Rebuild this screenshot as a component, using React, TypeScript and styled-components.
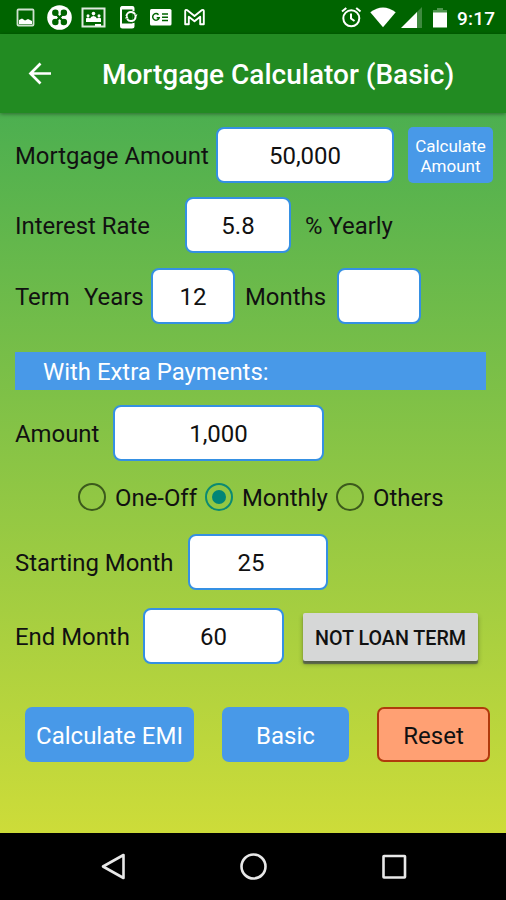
import React, { useState } from "react";
import styled, { createGlobalStyle } from "styled-components";

const GlobalStyle = createGlobalStyle`
  * {
    box-sizing: border-box;
  }

  body {
    margin: 0;
    font-family: Roboto, "Noto Sans", sans-serif;
  }
`;

const Screen = styled.div`
  display: flex;
  flex-direction: column;
  width: 506px;
  height: 900px;
  overflow: hidden;
`;

const StatusBar = styled.div`
  display: flex;
  justify-content: space-between;
  flex: none;
  height: 34px;
  background: #006400;
`;

const StatusGroup = styled.div<{ $width: number }>`
  display: flex;
  width: ${({ $width }) => $width}px;
`;

const Clock = styled.span`
  margin-left: 5px;
  color: #fff;
  font-size: 19px;
  font-weight: 500;
  line-height: 37px;
  letter-spacing: 0.2px;
`;

const Header = styled.header`
  display: flex;
  align-items: center;
  flex: none;
  height: 79px;
  padding: 3px 0 0 24px;
  background: #228b22;
  box-shadow: 0 1px 4px rgba(0, 0, 0, 0.4);
  z-index: 1;
`;

const BackButton = styled.button`
  display: flex;
  width: 78px;
  padding: 0 0 2px;
  border: 0;
  background: none;
`;

const Title = styled.h1`
  margin: 0;
  color: #fff;
  font-size: 28px;
  font-weight: 500;
  line-height: 36px;
  white-space: nowrap;
`;

const Form = styled.form`
  display: flex;
  flex-direction: column;
  flex: 1;
  padding: 14px 0 0 15px;
  background: linear-gradient(#4caf50, #cddc39);
`;

const Row = styled.div<{ $gap: number }>`
  display: flex;
  align-items: center;
  flex: none;
  height: 56px;
  margin-bottom: ${({ $gap }) => $gap}px;
`;

const Label = styled.label<{ $width?: number }>`
  width: ${({ $width }) => ($width ? `${$width}px` : "auto")};
  flex: none;
  padding-top: 2px;
  color: #111;
  font-size: 23.9px;
  line-height: 32px;
  white-space: nowrap;
`;

const Input = styled.input<{ $width: number; $shift?: number }>`
  width: ${({ $width }) => $width}px;
  height: 56px;
  padding: 2px ${({ $shift = 0 }) => $shift}px 0 0;
  border: 2px solid #3590e3;
  border-radius: 8px;
  outline: none;
  background: #fff;
  color: #111;
  font: 24px/32px Roboto, "Noto Sans", sans-serif;
  text-align: center;
`;

const Button = styled.button<{ $width: number; $small?: boolean; $danger?: boolean }>`
  width: ${({ $width }) => $width}px;
  height: ${({ $small }) => ($small ? 56 : 55)}px;
  padding: ${({ $small }) => ($small ? 1 : 2)}px 0 0;
  border: ${({ $danger }) => ($danger ? "2px solid #b03a0c" : "0")};
  border-radius: ${({ $small }) => ($small ? 5 : 7)}px;
  background: ${({ $danger }) => ($danger ? "#ffa073" : "#4899e8")};
  color: ${({ $danger }) => ($danger ? "#111" : "#fff")};
  font-family: inherit;
  font-size: ${({ $small }) => ($small ? 17 : 24)}px;
  line-height: ${({ $small }) => ($small ? 20 : 28)}px;
`;

const TermButton = styled.button`
  width: 175px;
  height: 48px;
  margin: 1px 0 0 19px;
  padding: 4px 0 0;
  border: 0;
  border-radius: 2px;
  background: #d6d7d7;
  box-shadow: 0 3px 1px rgba(70, 75, 80, 0.75), 0 3px 5px rgba(0, 0, 0, 0.3);
  color: #111;
  font-family: inherit;
  font-size: 19.7px;
  font-weight: 500;
`;

const Banner = styled.h2`
  width: 471px;
  height: 38px;
  margin: 0 0 15px;
  padding-left: 28px;
  flex: none;
  background: #4899e8;
  color: #fff;
  font-size: 23.9px;
  font-weight: 400;
  line-height: 40px;
`;

const Options = styled.div`
  display: flex;
  align-items: center;
  height: 32px;
  margin: 20px 0 21px 63px;
  flex: none;
`;

const Radio = styled.button<{ $checked: boolean }>`
  display: flex;
  align-items: center;
  justify-content: center;
  width: 28px;
  height: 28px;
  flex: none;
  margin-right: 9px;
  padding: 0;
  border: 2px solid ${({ $checked }) => ($checked ? "#0b8a72" : "#3c5a1c")};
  border-radius: 50%;
  background: none;

  &::after {
    content: "";
    width: 14px;
    height: 14px;
    border-radius: 50%;
    background: ${({ $checked }) => ($checked ? "#008577" : "transparent")};
  }
`;

const Actions = styled.div`
  display: flex;
  gap: 28px;
  margin: 43px 0 0 10px;
`;

const NavBar = styled.nav`
  flex: none;
  height: 67px;
  background: #000;
`;

const options = [
  { name: "One-Off", width: 90 },
  { name: "Monthly", width: 94 },
  { name: "Others", width: 80 },
];

const NotificationIcons = () => (
  <svg width="215" height="34" viewBox="0 0 215 34" fill="none">
    <rect x="17.5" y="9.5" width="16" height="16" rx="1" stroke="#cfe2cf" strokeWidth="1.8" />
    <path d="M19 24v-4l3-1.500 3 2 3-1.500 4 2v3z" fill="#fff" />
    <circle cx="59.5" cy="17.5" r="12.3" fill="#fff" />
    <g fill="#006400">
      <circle cx="55.4" cy="12.800" r="3.3" />
      <circle cx="63.800" cy="12.800" r="3.3" />
      <circle cx="55.4" cy="22" r="3.3" />
      <circle cx="63.800" cy="22" r="3.3" />
    </g>
    <path d="M55 13l9 9M64 13l-9 9" stroke="#006400" strokeWidth="2.200" />
    <path d="M59.600 6v9M59.600 20v9M48 17.400h9M62 17.400h9" stroke="#fff" strokeWidth="1.600" />
    <rect x="82.5" y="8.5" width="22" height="18" stroke="#dfeadf" strokeWidth="2" />
    <path d="M86 22v-3.500q2-2 4 0 1-2.500 3.500-2.500t3.500 2.500q2-2 4 0V22z" fill="#fff" />
    <circle cx="88" cy="15.800" r="1.500" fill="#fff" />
    <circle cx="93.500" cy="13.600" r="1.800" fill="#fff" />
    <circle cx="99" cy="15.800" r="1.500" fill="#fff" />
    <path d="M95 25h6" stroke="#fff" strokeWidth="2" />
    <rect x="121" y="7" width="12.500" height="20.500" rx="1.500" stroke="#fff" strokeWidth="2" />
    <path d="M121 6.500h12.500v3H121zM121 23.500h12.500v4H121z" fill="#fff" />
    <path d="M133.500 11v12" stroke="#006400" strokeWidth="2.500" />
    <circle cx="131" cy="16.500" r="4.600" stroke="#fff" strokeWidth="2" strokeDasharray="11.500 2.950" />
    <path d="M134 14.500h3.500l-2 3.500zM128.500 18.500H125l2-3.500z" fill="#fff" />
    <rect x="150" y="9" width="21.500" height="16.500" rx="1.500" fill="#fff" />
    <path d="M158.500 14.700a3.300 3.300 0 1 0 .7 3h-2.500" stroke="#006400" strokeWidth="1.500" />
    <path d="M162 14h6M162 17.300h6M162 20.500h6" stroke="#006400" strokeWidth="1.400" />
    <path
      d="M185.200 24.300v-13q0-2 1.800-1.200l7.500 5.800 7.500-5.800q1.800-.8 1.800 1.200v13h-3.600v-7.500l-5.700 4.500-5.700-4.500v7.500z"
      stroke="#fff"
      strokeWidth="1.900"
      strokeLinejoin="round"
    />
  </svg>
);

const SystemIcons = () => (
  <svg width="111" height="34" viewBox="341 0 111 34" fill="none">
    <circle cx="351.300" cy="18.300" r="8" stroke="#fff" strokeWidth="2" />
    <path d="M351 13.500v5l3.500 2.500M342 11.500l4.300-3.600M360.500 11.500l-4.300-3.600" stroke="#fff" strokeWidth="2" />
    <path d="M370.300 12.200q12.700-9.500 25.400 0L383 27.300z" fill="#fff" />
    <path d="M422 7v21h-6V13z" fill="#3f8a3f" />
    <path d="M417 12v16h-16z" fill="#fff" />
    <path d="M437 8h6v2h4v3h-14v-3h4z" fill="#4f964f" />
    <path d="M433 12.500h14v15h-14z" fill="#fff" />
  </svg>
);

const App = () => {
  const [frequency, setFrequency] = useState("Monthly");

  return (
    <Screen>
      <GlobalStyle />
      <StatusBar>
        <StatusGroup $width={215}>
          <NotificationIcons />
        </StatusGroup>
        <StatusGroup $width={165}>
          <SystemIcons />
          <Clock>9:17</Clock>
        </StatusGroup>
      </StatusBar>
      <Header>
        <BackButton aria-label="Back">
          <svg width="32" height="32" viewBox="0 0 32 32" fill="none">
            <path d="M27 15.500H6.500M16.500 5.500l-10 10 10 10" stroke="#fff" strokeWidth="2.700" />
          </svg>
        </BackButton>
        <Title>Mortgage Calculator (Basic)</Title>
      </Header>
      <Form onSubmit={(e) => e.preventDefault()}>
        <Row $gap={14}>
          <Label $width={201}>Mortgage Amount</Label>
          <Input $width={178} defaultValue="50,000" />
          <Button $width={85} $small style={{ marginLeft: 14 }}>
            Calculate Amount
          </Button>
        </Row>
        <Row $gap={15}>
          <Label $width={170}>Interest Rate</Label>
          <Input $width={106} defaultValue="5.8" />
          <Label style={{ marginLeft: 14 }}>% Yearly</Label>
        </Row>
        <Row $gap={28}>
          <Label $width={69}>Term</Label>
          <Label $width={67}>Years</Label>
          <Input $width={84} defaultValue="12" />
          <Label $width={92} style={{ marginLeft: 10 }}>
            Months
          </Label>
          <Input $width={84} />
        </Row>
        <Banner>With Extra Payments:</Banner>
        <Row $gap={0}>
          <Label $width={98}>Amount</Label>
          <Input $width={211} defaultValue="1,000" />
        </Row>
        <Options>
          {options.map(({ name, width }) => (
            <React.Fragment key={name}>
              <Radio
                type="button"
                aria-label={name}
                $checked={frequency === name}
                onClick={() => setFrequency(name)}
              />
              <Label $width={width}>{name}</Label>
            </React.Fragment>
          ))}
        </Options>
        <Row $gap={18}>
          <Label $width={173}>Starting Month</Label>
          <Input $width={140} $shift={14} defaultValue="25" />
        </Row>
        <Row $gap={0}>
          <Label $width={128}>End Month</Label>
          <Input $width={141} defaultValue="60" />
          <TermButton>NOT LOAN TERM</TermButton>
        </Row>
        <Actions>
          <Button $width={169}>Calculate EMI</Button>
          <Button $width={127}>Basic</Button>
          <Button $width={113} $danger>
            Reset
          </Button>
        </Actions>
      </Form>
      <NavBar>
        <svg width="506" height="67" viewBox="0 833 506 67" fill="none" stroke="#e8e8e8" strokeWidth="2.600">
          <path d="M123.500 855v23l-20.500-11.500z" strokeLinejoin="round" />
          <circle cx="253.500" cy="866.500" r="12" />
          <rect x="383.500" y="856" width="21.500" height="21.500" rx="0.500" />
        </svg>
      </NavBar>
    </Screen>
  );
};

export default App;
